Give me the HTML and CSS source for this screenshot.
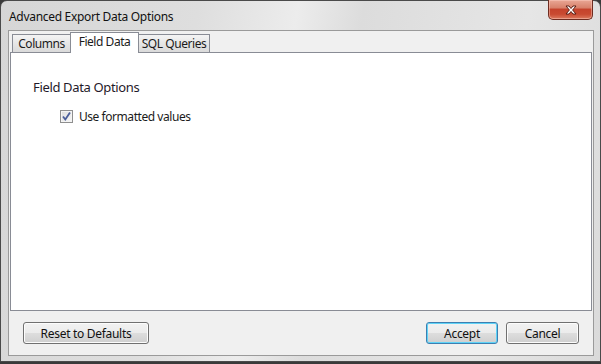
FILE: index.html
```html
<!DOCTYPE html>
<html>
<head>
  <title>Advanced Export Data Options</title>
  <link rel="stylesheet" href="styles.css">
</head>
<body>
  <div class="window">
    <div class="titlebar">
      <span class="title">Advanced Export Data Options</span>
      <button class="close-btn" title="Close">
        <svg width="16" height="10" viewBox="0 0 16 10">
          <path d="M3 1 L6 1 L8 3.5 L10 1 L13 1 L9.6 5 L13 9 L10 9 L8 6.5 L6 9 L3 9 L6.4 5 Z" fill="#fff" stroke="#5a1e14" stroke-width="1" stroke-linejoin="round"/>
        </svg>
      </button>
    </div>

    <div class="client">
      <div class="tabs">
        <div class="tab tab-columns">Columns</div>
        <div class="tab tab-field active">Field Data</div>
        <div class="tab tab-sql">SQL Queries</div>
      </div>

      <div class="panel">
        <h2 class="group-title">Field Data Options</h2>
        <label class="check-row">
          <span class="checkbox">
            <svg width="11" height="11" viewBox="0 0 11 11">
              <path d="M2 5.5 L4.3 8.5 L9 1.5" fill="none" stroke="#4b5e9a" stroke-width="1.8"/>
            </svg>
          </span>
          <span>Use formatted values</span>
        </label>
      </div>

      <div class="footer">
        <button class="btn btn-reset">Reset to Defaults</button>
        <div class="footer-right">
          <button class="btn btn-accept">Accept</button>
          <button class="btn btn-cancel">Cancel</button>
        </div>
      </div>
    </div>
  </div>
</body>
</html>
```

FILE: styles.css
```css
html, body {
  margin: 0;
  padding: 0;
}

body {
  width: 601px;
  height: 364px;
  background: #3a3a3a;
  font-family: "Noto Sans", "Open Sans", Arial, sans-serif;
  font-size: 12px;
  letter-spacing: -0.45px;
  color: #1b1b1b;
  overflow: hidden;
}

.window {
  box-sizing: border-box;
  width: 601px;
  height: 362px;
  border: 1px solid #4a4a4a;
  border-radius: 7px 7px 0 0;
  background: linear-gradient(100deg, #d6d6d6 0%, #dedede 30%, #ececec 45%, #dcdcdc 55%, #e6e6e6 80%, #dadada 100%);
  display: flex;
  flex-direction: column;
}

.titlebar {
  height: 29px;
  display: flex;
  align-items: flex-start;
  justify-content: space-between;
  flex-shrink: 0;
}

.title {
  margin: 7px 0 0 8px;
  letter-spacing: -0.3px;
  color: #111;
}

.close-btn {
  box-sizing: border-box;
  width: 45px;
  height: 20px;
  margin: -1px 7px 0 0;
  padding: 0;
  border: 1px solid #6e2c20;
  border-top: none;
  border-radius: 0 0 5px 5px;
  background: linear-gradient(#e9a795 0%, #d8826c 40%, #c5432c 50%, #c94a31 75%, #dc7a5e 100%);
  display: flex;
  align-items: center;
  justify-content: center;
  box-shadow: inset 0 0 0 1px rgba(255, 210, 200, 0.45);
}

.client {
  box-sizing: border-box;
  width: 586px;
  height: 326px;
  margin-left: 7px;
  border: 1px solid #9a9a9a;
  background: #f0f0f0;
  display: flex;
  flex-direction: column;
  padding: 1px 1px 0 1px;
}

.tabs {
  display: flex;
  align-items: flex-end;
  height: 20px;
  padding-left: 2px;
}

.tab {
  box-sizing: border-box;
  height: 18px;
  border: 1px solid #898c95;
  border-bottom: none;
  background: linear-gradient(#f4f4f4, #e6e6e6 50%, #dadada);
  text-align: center;
  line-height: 17px;
}

.tab-columns {
  width: 58px;
  border-right: none;
}

.tab-field {
  width: 69px;
}

.tab-sql {
  width: 71px;
  border-left: none;
}

.tab.active {
  position: relative;
  z-index: 1;
  height: 21px;
  margin-bottom: -1px;
  background: #fff;
  line-height: 18px;
}

.panel {
  box-sizing: border-box;
  height: 259px;
  border: 1px solid #898c95;
  background: #fff;
  padding: 25px 0 0 22px;
}

.group-title {
  margin: 0;
  font-size: 13px;
  font-weight: normal;
  letter-spacing: -0.35px;
  color: #1f1a2a;
  line-height: 19px;
}

.check-row {
  display: flex;
  align-items: center;
  gap: 6px;
  margin: 11px 0 0 27px;
}

.checkbox {
  box-sizing: border-box;
  width: 13px;
  height: 13px;
  border: 1px solid #8f8f8f;
  background: linear-gradient(135deg, #dcdcdc, #f8f8f8);
  box-shadow: inset 0 0 0 1px #f4f4f4;
  display: flex;
  align-items: center;
  justify-content: center;
}

.footer {
  display: flex;
  justify-content: space-between;
  padding: 11px 13px 0 13px;
}

.footer-right {
  display: flex;
  gap: 8px;
}

.btn {
  box-sizing: border-box;
  height: 22px;
  padding: 0;
  border: 1px solid #707070;
  border-radius: 3px;
  background: linear-gradient(#f2f2f2 0%, #ebebeb 50%, #dddddd 51%, #cfcfcf 100%);
  box-shadow: inset 0 0 0 1px #fcfcfc;
  font-family: "Noto Sans", "Open Sans", Arial, sans-serif;
  font-size: 12px;
  letter-spacing: -0.3px;
  color: #111;
}

.btn-reset {
  width: 126px;
}

.btn-accept {
  width: 72px;
  border-color: #3c7fb1;
  box-shadow: inset 0 0 0 1px #5fd3f7;
}

.btn-cancel {
  width: 73px;
}
```
